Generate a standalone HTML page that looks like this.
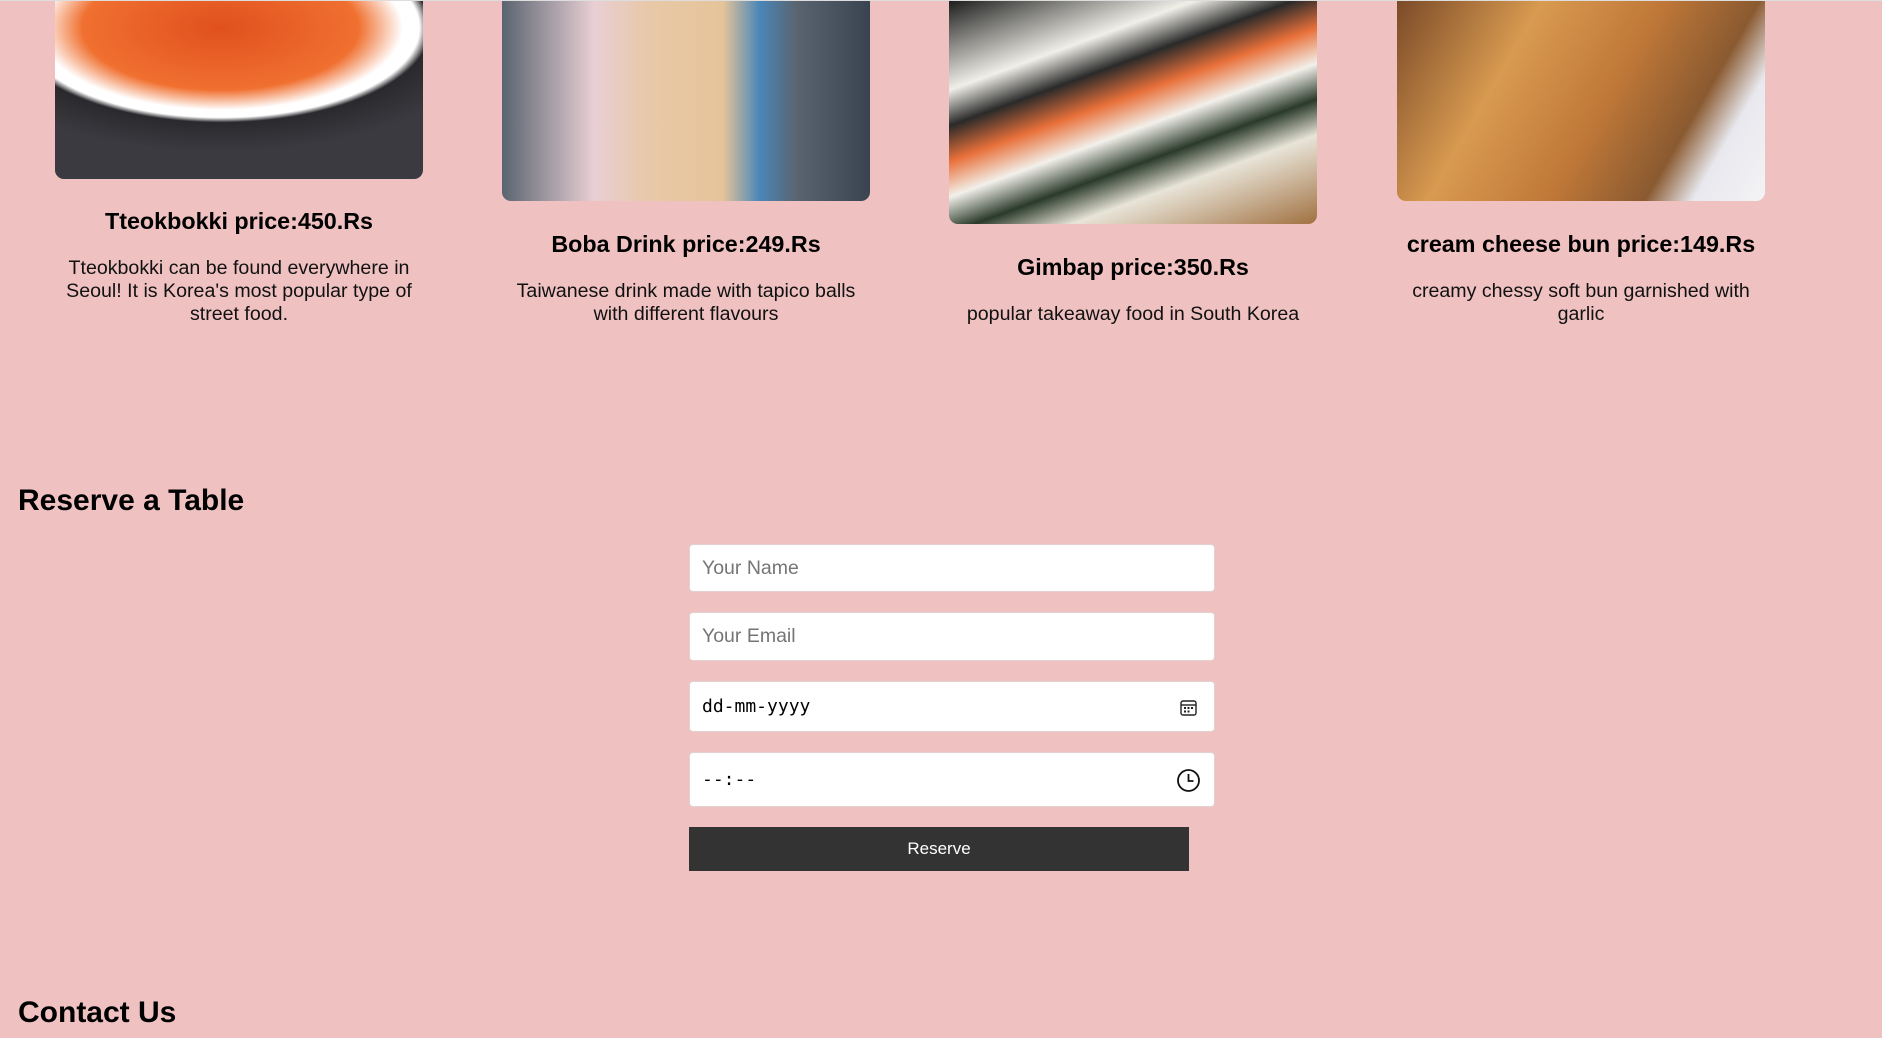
<!DOCTYPE html>
<html><head><meta charset="utf-8"><style>
html,body{margin:0;padding:0}
body{width:1882px;height:1038px;background:#efc1c1;position:relative;overflow:hidden;font-family:"Liberation Sans",Arial,sans-serif;color:#000;border-top:1px solid #ddd;box-sizing:border-box}
.img{position:absolute;width:368px;border-radius:0 0 9px 9px;overflow:hidden}
.t{position:absolute;width:368px;text-align:center;font-weight:bold;font-size:23.3px;line-height:26px}
.d{position:absolute;width:368px;left:0;text-align:center;font-size:19.6px;line-height:23px;color:#111}
h2{position:absolute;margin:0;font-size:30px;font-weight:bold;left:18px}
.in{position:absolute;left:689px;width:526px;background:#fff;border-radius:4px;border:1px solid #e2d0d0;box-sizing:border-box;font-size:19.5px;color:#757575;padding-left:12px;display:flex;align-items:center}
.mono{font-family:"DejaVu Sans Mono","Liberation Mono",monospace;color:#000;font-size:18px}
</style></head><body>
<div class="img" style="left:55px;top:0;height:178px;background:radial-gradient(ellipse 75% 70% at 45% 15%,#e0501e 0,#f07030 50%,#fff 66%,#fff 72%,#2a2a2e 76%,#3a3a40 100%)"></div>
<div class="img" style="left:502px;top:0;height:200px;background:linear-gradient(90deg,#5a6470 0,#e8cfd4 25%,#e8c8a8 40%,#e6c49a 60%,#4a86b8 70%,#5a6470 80%,#3a4450 100%)"></div>
<div class="img" style="left:949px;top:0;height:223px;background:linear-gradient(160deg,#1e1e1e 0,#f0efe8 25%,#2a2a2a 35%,#e8703a 45%,#f2f0ea 55%,#2a3a2a 65%,#e8e4d8 75%,#a07040 100%)"></div>
<div class="img" style="left:1397px;top:0;height:200px;background:linear-gradient(120deg,#7a4a28 0,#d89a50 30%,#c07838 55%,#8a5a30 75%,#e8e8ee 85%,#f4f4f6 100%)"></div>

<div class="t" style="left:55px;top:207px">Tteokbokki price:450.Rs</div>
<div class="d" style="left:55px;top:256px">Tteokbokki can be found everywhere in Seoul! It is Korea's most popular type of street food.</div>
<div class="t" style="left:502px;top:230px">Boba Drink price:249.Rs</div>
<div class="d" style="left:502px;top:279px">Taiwanese drink made with tapico balls<br>with different flavours</div>
<div class="t" style="left:949px;top:253px">Gimbap price:350.Rs</div>
<div class="d" style="left:949px;top:302px">popular takeaway food in South Korea</div>
<div class="t" style="left:1397px;top:230px">cream cheese bun price:149.Rs</div>
<div class="d" style="left:1397px;top:279px">creamy chessy soft bun garnished with garlic</div>

<h2 style="top:483px">Reserve a Table</h2>
<div class="in" style="top:543px;height:48px">Your Name</div>
<div class="in" style="top:611px;height:49px">Your Email</div>
<div class="in mono" style="top:680px;height:51px">dd-mm-yyyy
<svg style="position:absolute;right:16px;top:16px" width="19" height="19" viewBox="0 0 19 19" fill="none" stroke="#222" stroke-width="1.4"><rect x="2" y="3" width="15" height="14" rx="2"/><line x1="2" y1="7" x2="17" y2="7"/><g fill="#222" stroke="none"><rect x="5" y="9" width="2" height="2"/><rect x="8.5" y="9" width="2" height="2"/><rect x="12" y="9" width="2" height="2"/><rect x="5" y="12.5" width="2" height="2"/><rect x="8.5" y="12.5" width="2" height="2"/></g></svg></div>
<div class="in mono" style="top:751px;height:55px">--:--
<svg style="position:absolute;right:13px;top:15px" width="25" height="25" viewBox="0 0 25 25" fill="none" stroke="#111" stroke-width="1.8"><circle cx="12.5" cy="12.5" r="10.5"/><path d="M12.5 6v7h5"/></svg></div>
<div style="position:absolute;left:689px;top:826px;width:500px;height:44px;background:#333;color:#fff;font-size:17px;display:flex;align-items:center;justify-content:center">Reserve</div>

<h2 style="top:995px">Contact Us</h2>
</body></html>
